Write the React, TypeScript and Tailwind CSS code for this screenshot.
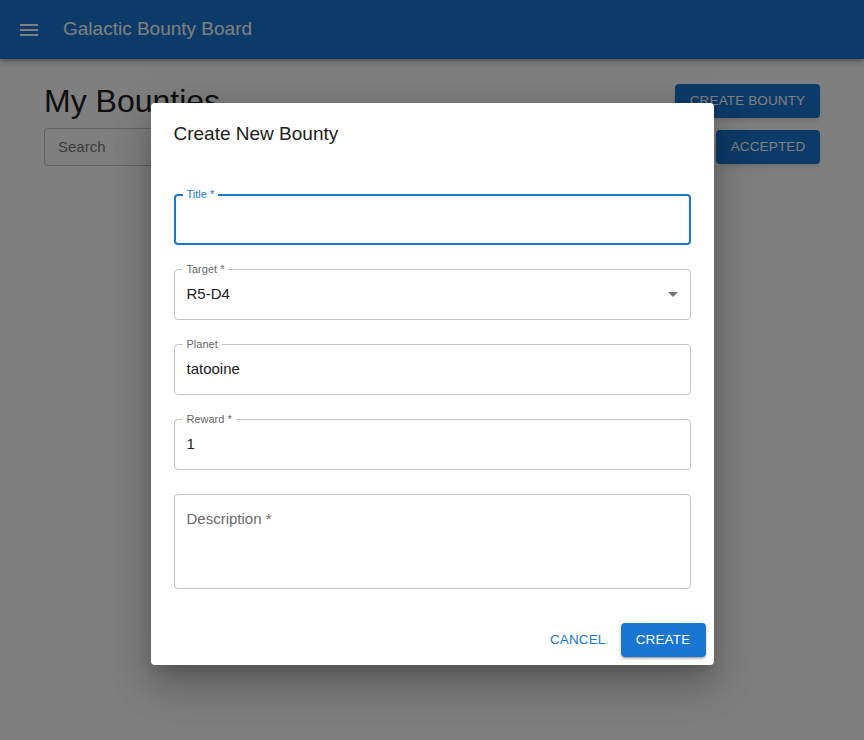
import React from 'react';

type FieldProps = {
  label?: string;
  value?: string;
  placeholder?: string;
  focused?: boolean;
  select?: boolean;
  tall?: boolean;
};

function OutlinedField({ label, value, placeholder, focused, select, tall }: FieldProps) {
  const box = focused
    ? 'border-2 border-[#1976d2]'
    : 'border border-[#c4c4c4]';
  return (
    <div className={`relative rounded-[4px] ${box} ${tall ? 'h-[95px]' : 'h-[51px]'}`}>
      {label && (
        <span
          className={`absolute ${focused ? 'left-[7px] -top-[9px] text-[#1976d2]' : 'left-[8px] -top-[8px] text-[#666666]'} bg-white px-[4px] text-[11px] leading-[14px]`}
        >
          {label}
        </span>
      )}
      {tall ? (
        <div className="pl-[12px] pt-[13px] text-[15px] leading-[22px] text-[#6b6b6b]">{placeholder}</div>
      ) : (
        <div className={`flex h-full items-center ${focused ? 'pl-[11px]' : 'pl-[12px]'} pr-[12px] text-[15px] text-[#212121]`}>
          <span className="flex-1">{value}</span>
          {select && (
            <svg width="10" height="5" viewBox="0 0 10 5" className="mr-[0px]">
              <path d="M0 0h10L5 5z" fill="#757575" />
            </svg>
          )}
        </div>
      )}
    </div>
  );
}

export default function App() {
  return (
    <div className="relative h-[740px] w-full overflow-hidden bg-white font-['Liberation_Sans',Arial,sans-serif]">
      {/* App bar */}
      <header className="flex h-[59px] items-center bg-[#1976d2] shadow-[0_2px_4px_-1px_rgba(0,0,0,0.2),0_4px_5px_0_rgba(0,0,0,0.14),0_1px_10px_0_rgba(0,0,0,0.12)]">
        <svg width="24" height="24" viewBox="0 0 24 24" className="ml-[17px]">
          <path d="M3 18h18v-2H3zm0-5h18v-2H3zm0-7v2h18V6z" fill="#ffffff" />
        </svg>
        <span className="ml-[22px] text-[19px] text-white">Galactic Bounty Board</span>
      </header>

      {/* Page content */}
      <div className="flex items-start justify-between px-[44px]">
        <div className="flex flex-col">
          <h1 className="mt-[22px] h-[40px] text-[32px] leading-[40px] text-[#212121]">My Bounties</h1>
          <div className="mt-[7px] flex h-[38px] w-[320px] items-center rounded-[4px] border border-[#c4c4c4] pl-[13px] text-[15px] text-[#777777]">
            Search
          </div>
        </div>
        <div className="flex flex-col items-end">
          <button className="mt-[25px] flex h-[34px] w-[145px] items-center justify-center rounded-[4px] bg-[#1976d2] text-[13.5px] tracking-[0.01em] text-white shadow-md">
            CREATE BOUNTY
          </button>
          <div className="mt-[12px] flex gap-[12px]">
            <button className="flex h-[34px] w-[104px] items-center justify-center rounded-[4px] bg-[#1976d2] text-[13.5px] tracking-[0.01em] text-white shadow-md">
              OPEN
            </button>
            <button className="flex h-[34px] w-[104px] items-center justify-center rounded-[4px] bg-[#1976d2] text-[13.5px] tracking-[0.01em] text-white shadow-md">
              ACCEPTED
            </button>
          </div>
        </div>
      </div>

      {/* Backdrop + dialog */}
      <div className="absolute inset-0 flex items-start justify-center bg-black/50 pt-[103px]">
        <div className="flex w-[563px] flex-col rounded-[4px] bg-white shadow-[0_11px_15px_-7px_rgba(0,0,0,0.2),0_24px_38px_3px_rgba(0,0,0,0.14),0_9px_46px_8px_rgba(0,0,0,0.12)]">
          <div className="px-[23px] pt-[16px] pb-[14px] text-[19px] leading-[30px] text-[#212121]">
            Create New Bounty
          </div>
          <div className="flex flex-col gap-[24px] px-[23px] pt-[31px] pb-[26px]">
            <OutlinedField label="Title *" focused />
            <OutlinedField label="Target *" value="R5-D4" select />
            <OutlinedField label="Planet" value="tatooine" />
            <OutlinedField label="Reward *" value="1" />
            <OutlinedField tall placeholder="Description *" />
          </div>
          <div className="flex items-center justify-end gap-[7px] p-[8px]">
            <button className="flex h-[34px] items-center rounded-[4px] px-[8px] text-[13.5px] tracking-[0.01em] text-[#1976d2]">
              CANCEL
            </button>
            <button className="flex h-[34px] w-[85px] items-center justify-center rounded-[4px] bg-[#1976d2] text-[13.5px] tracking-[0.01em] text-white shadow-[0_3px_1px_-2px_rgba(0,0,0,0.2),0_2px_2px_0_rgba(0,0,0,0.14),0_1px_5px_0_rgba(0,0,0,0.12)]">
              CREATE
            </button>
          </div>
        </div>
      </div>
    </div>
  );
}
